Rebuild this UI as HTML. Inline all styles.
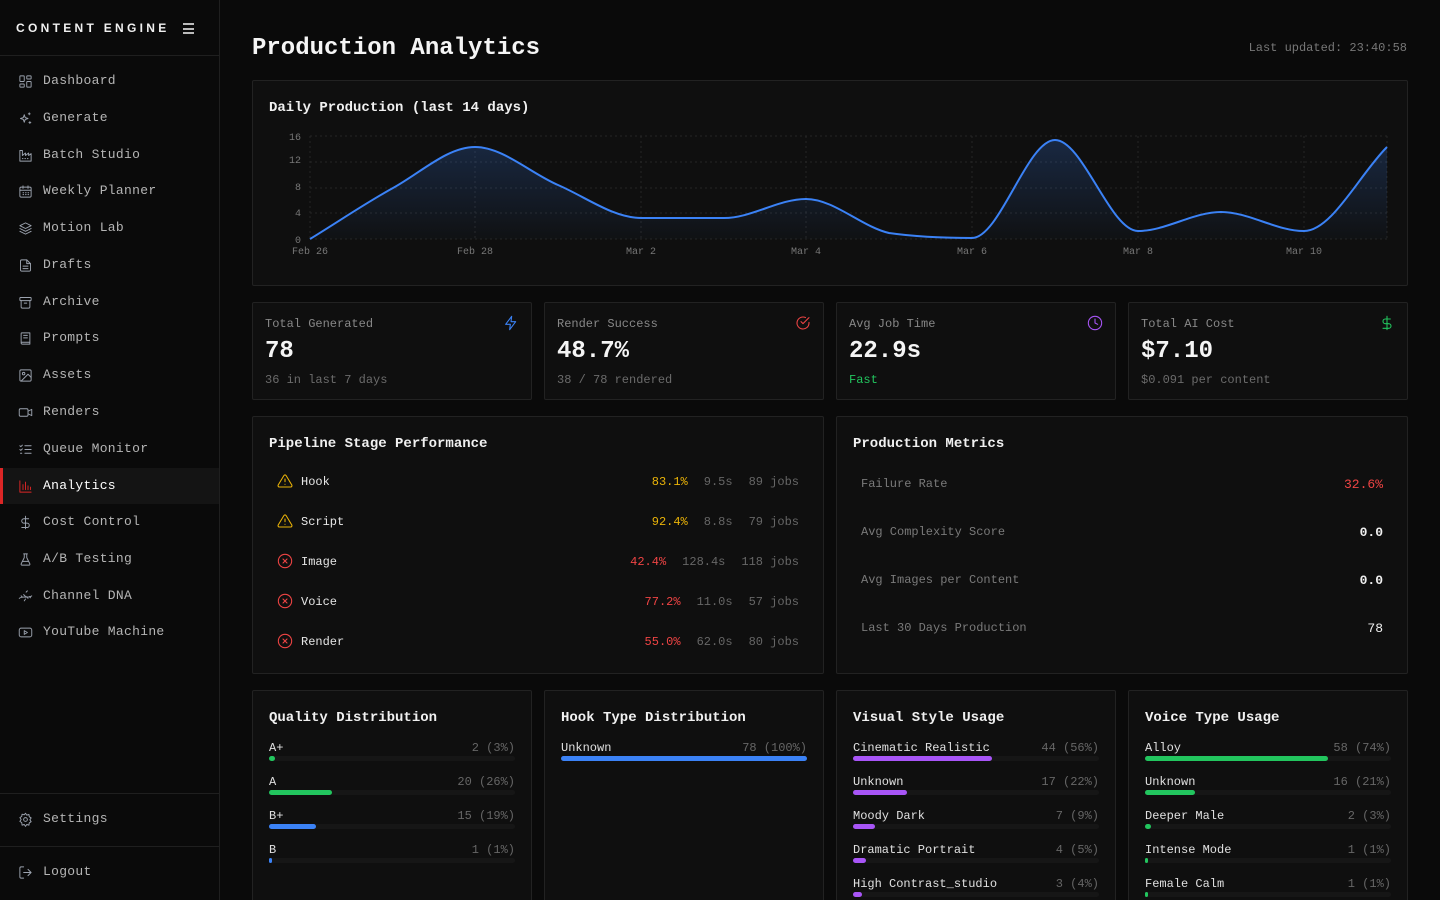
<!DOCTYPE html>
<html><head><meta charset="utf-8"><style>
*{box-sizing:border-box;margin:0;padding:0}
html,body{width:1440px;height:900px;overflow:hidden}
body{background:#0a0a0a;font-family:"Liberation Mono",monospace;color:#e5e5e5;position:relative}
.sb{position:absolute;left:0;top:0;width:220px;height:900px;background:#0a0a0a;border-right:1px solid #1f1f1f}
.logo{position:absolute;left:16px;top:21px;font-family:"Liberation Sans",sans-serif;font-weight:bold;font-size:12px;letter-spacing:3.3px;color:#f0f0f0}
.hamb{position:absolute;left:183px;top:23px;width:11px}
.hamb i{display:block;height:2px;background:#bbb;margin-bottom:2.5px}
.hl{position:absolute;left:0;width:219px;height:1px;background:#1f1f1f}
.nav{position:absolute;left:0;width:219px;height:36px;display:flex;align-items:center;font-size:13px;color:#b5b5b5;letter-spacing:.3px}
.nav svg{position:absolute;left:18px;width:15px;height:15px;fill:none;stroke:#9ca3af;stroke-width:1.5;stroke-linecap:round;stroke-linejoin:round}
.nav span{position:absolute;left:43px;top:10px}
.nav.act{background:#141414;color:#fff}
.nav.act::before{content:"";position:absolute;left:0;top:0;width:3px;height:36px;background:#dc2626}
.nav.act svg{stroke:#dc2626}
.card{position:absolute;background:#0f0f0f;border:1px solid #222;border-radius:2px}
h1{position:absolute;left:252px;top:35px;font-size:24px;font-weight:bold;color:#f5f5f5}
.upd{position:absolute;right:33px;top:41px;font-size:12px;color:#777}
.ttl{position:absolute;left:16px;font-size:14px;font-weight:bold;color:#f0f0f0}
.sl{position:absolute;left:12px;top:14px;font-size:12px;color:#888}
.sv{position:absolute;left:12px;top:35px;font-size:24px;font-weight:bold;color:#f5f5f5}
.ss{position:absolute;left:12px;top:70px;font-size:12px;color:#6b6b6b}
.si{position:absolute;right:12px;top:12px;width:16px;height:16px;fill:none;stroke-width:1.6;stroke-linecap:round;stroke-linejoin:round}
.pr{position:absolute;left:24px;right:24px;height:20px;font-size:12px}
.pr svg{position:absolute;left:0;top:2px;width:16px;height:16px;fill:none;stroke-width:1.6;stroke-linecap:round;stroke-linejoin:round}
.pr .n{position:absolute;left:24px;top:4px;color:#e5e5e5}
.pr .r{position:absolute;right:0;top:4px;color:#666;white-space:nowrap}
.pr .r span{margin-left:16px}
.mr{position:absolute;left:24px;right:24px;font-size:12px;color:#7a7a7a}
.mr b{position:absolute;right:0;top:0;font-size:13px;color:#f0f0f0}
.br{position:absolute;left:16px;right:16px;height:30px;font-size:12px}
.br .l{position:absolute;left:0;top:0;color:#e0e0e0}
.br .v{position:absolute;right:0;top:0;color:#666}
.br .t{position:absolute;left:0;right:0;top:15px;height:5px;background:#161616;border-radius:3px}
.br .t i{display:block;height:5px;border-radius:3px}
</style></head><body>
<div class="sb">
<div class="logo">CONTENT ENGINE</div>
<div class="hamb"><i></i><i></i><i></i></div>
<div class="hl" style="top:55px"></div>
<div class="nav" style="top:63px"><svg viewBox="0 0 24 24"><rect x="3" y="3" width="7" height="9" rx="1"/><rect x="14" y="3" width="7" height="5" rx="1"/><rect x="14" y="12" width="7" height="9" rx="1"/><rect x="3" y="16" width="7" height="5" rx="1"/></svg><span>Dashboard</span></div>
<div class="nav" style="top:100px"><svg viewBox="0 0 24 24"><path d="M10 6l1.5 4.5L16 12l-4.5 1.5L10 18l-1.5-4.5L4 12l4.5-1.5z"/><path d="M18 3v3M16.5 4.5h3M19 17v3M17.5 18.5h3"/></svg><span>Generate</span></div>
<div class="nav" style="top:137px"><svg viewBox="0 0 24 24"><path d="M3 21V4h4v8l5-4v4l5-4v4l4-3v12z"/><path d="M7 17h1M11 17h1M15 17h1"/></svg><span>Batch Studio</span></div>
<div class="nav" style="top:173px"><svg viewBox="0 0 24 24"><rect x="3" y="5" width="18" height="16" rx="2"/><path d="M8 3v4M16 3v4M3 10h18M8 14h1M12 14h1M16 14h1M8 17h1M12 17h1M16 17h1"/></svg><span>Weekly Planner</span></div>
<div class="nav" style="top:210px"><svg viewBox="0 0 24 24"><path d="M12 3l9 4.5-9 4.5-9-4.5z"/><path d="M3 12l9 4.5 9-4.5M3 16.5L12 21l9-4.5"/></svg><span>Motion Lab</span></div>
<div class="nav" style="top:247px"><svg viewBox="0 0 24 24"><path d="M14 3H6a2 2 0 0 0-2 2v14a2 2 0 0 0 2 2h12a2 2 0 0 0 2-2V9z"/><path d="M14 3v6h6M8 13h8M8 17h8"/></svg><span>Drafts</span></div>
<div class="nav" style="top:284px"><svg viewBox="0 0 24 24"><rect x="3" y="4" width="18" height="5" rx="1"/><path d="M5 9v10a2 2 0 0 0 2 2h10a2 2 0 0 0 2-2V9M10 13h4"/></svg><span>Archive</span></div>
<div class="nav" style="top:320px"><svg viewBox="0 0 24 24"><path d="M5 4a1 1 0 0 1 1-1h13v15H6a1 1 0 0 0-1 1zM5 19a2 2 0 0 0 2 2h12v-3"/><path d="M9 7h6M9 11h6"/></svg><span>Prompts</span></div>
<div class="nav" style="top:357px"><svg viewBox="0 0 24 24"><rect x="3" y="3" width="18" height="18" rx="2"/><circle cx="9" cy="9" r="2"/><path d="M21 15l-5-5L5 21"/></svg><span>Assets</span></div>
<div class="nav" style="top:394px"><svg viewBox="0 0 24 24"><rect x="2" y="6" width="14" height="12" rx="2"/><path d="M16 10l6-3v10l-6-3"/></svg><span>Renders</span></div>
<div class="nav" style="top:431px"><svg viewBox="0 0 24 24"><path d="M3 6l1.5 1.5L7 5M3 12l1.5 1.5L7 11M11 6h10M11 12h10M11 18h10M4 18h2"/></svg><span>Queue Monitor</span></div>
<div class="nav act" style="top:468px"><svg viewBox="0 0 24 24"><path d="M3 3v18h18M8 17V9M12 17V5M16 17v-6M20 17v-4"/></svg><span>Analytics</span></div>
<div class="nav" style="top:504px"><svg viewBox="0 0 24 24"><path d="M12 2v20M17 6H9.5a3.5 3.5 0 0 0 0 7h5a3.5 3.5 0 0 1 0 7H6"/></svg><span>Cost Control</span></div>
<div class="nav" style="top:541px"><svg viewBox="0 0 24 24"><path d="M9 3h6M10 3v6l-5 10a1.5 1.5 0 0 0 1.3 2h11.4a1.5 1.5 0 0 0 1.3-2L14 9V3M7 15h10"/></svg><span>A/B Testing</span></div>
<div class="nav" style="top:578px"><svg viewBox="0 0 24 24"><path d="M2 15c6.7-5 13.3 1 20-4M5 11l2 2M9 9l3 3M14 12l2 3M18 12l2 2M10 19l2-3M13 5l2-2"/></svg><span>Channel DNA</span></div>
<div class="nav" style="top:614px"><svg viewBox="0 0 24 24"><rect x="2" y="5" width="20" height="14" rx="3"/><path d="M10 9l5 3-5 3z"/></svg><span>YouTube Machine</span></div>
<div class="hl" style="top:793px"></div>
<div class="nav" style="top:801px"><svg viewBox="0 0 24 24"><circle cx="12" cy="12" r="3"/><path d="M12 2l2 3 3.5-1 .5 3.5 3 2-2 3 2 3-3 2-.5 3.5-3.5-1-2 3-2-3-3.5 1L6 17l-3-2 2-3-2-3 3-2 .5-3.5 3.5 1z"/></svg><span>Settings</span></div>
<div class="hl" style="top:846px"></div>
<div class="nav" style="top:854px"><svg viewBox="0 0 24 24"><path d="M9 21H5a2 2 0 0 1-2-2V5a2 2 0 0 1 2-2h4M16 17l5-5-5-5M21 12H9"/></svg><span>Logout</span></div>
</div>

<h1>Production Analytics</h1>
<div class="upd">Last updated: 23:40:58</div>

<div class="card" style="left:252px;top:80px;width:1156px;height:206px">
<div class="ttl" style="top:19px">Daily Production (last 14 days)</div>
</div>
<svg style="position:absolute;left:0;top:0" width="1440" height="300" font-family="Liberation Mono, monospace" font-size="10">
<defs><linearGradient id="g" x1="0" y1="0" x2="0" y2="1"><stop offset="0" stop-color="#3b82f6" stop-opacity="0.22"/><stop offset="1" stop-color="#3b82f6" stop-opacity="0.02"/></linearGradient></defs>
<g stroke="#262626" stroke-dasharray="2 3" stroke-width="1">
<path d="M310 136H1387M310 162H1387M310 188H1387M310 213H1387M310 239H1387"/>
<path d="M310 136V239M475 136V239M641 136V239M806 136V239M972 136V239M1138 136V239M1304 136V239M1387 136V239"/>
</g>
<g fill="#777" text-anchor="end"><text x="301" y="140">16</text><text x="301" y="163">12</text><text x="301" y="190">8</text><text x="301" y="216">4</text><text x="301" y="243">0</text></g>
<g fill="#777" text-anchor="middle"><text x="310" y="254">Feb 26</text><text x="475" y="254">Feb 28</text><text x="641" y="254">Mar 2</text><text x="806" y="254">Mar 4</text><text x="972" y="254">Mar 6</text><text x="1138" y="254">Mar 8</text><text x="1304" y="254">Mar 10</text></g>
<path d="M310 239C337.7 222.1 365.3 203.2 393 188C420.7 172.8 447.3 147 475 147C502.7 147 530.3 173.1 558 185C585.7 196.9 613.3 218 641 218C668.7 218 696.3 218 724 218C751.7 218 778.3 199 806 199C833.7 199 861.3 226.6 889 233C916.7 237 944.3 238 972 238C999.7 238 1027.3 140 1055 140C1082.7 140 1110.3 231 1138 231C1165.7 231 1193.3 212 1221 212C1248.7 212 1276.3 231 1304 231C1331.7 231 1359.3 174.7 1387 147V239H310Z" fill="url(#g)"/>
<path d="M310 239C337.7 222.1 365.3 203.2 393 188C420.7 172.8 447.3 147 475 147C502.7 147 530.3 173.1 558 185C585.7 196.9 613.3 218 641 218C668.7 218 696.3 218 724 218C751.7 218 778.3 199 806 199C833.7 199 861.3 226.6 889 233C916.7 237 944.3 238 972 238C999.7 238 1027.3 140 1055 140C1082.7 140 1110.3 231 1138 231C1165.7 231 1193.3 212 1221 212C1248.7 212 1276.3 231 1304 231C1331.7 231 1359.3 174.7 1387 147" fill="none" stroke="#3b82f6" stroke-width="2"/>
</svg>

<div class="card" style="left:252px;top:302px;width:280px;height:98px"><div class="sl">Total Generated</div><div class="sv">78</div><div class="ss">36 in last 7 days</div><svg class="si" viewBox="0 0 24 24" stroke="#3b82f6"><path d="M13 2L4 14h7l-1 8 9-12h-7z"/></svg></div>
<div class="card" style="left:544px;top:302px;width:280px;height:98px"><div class="sl">Render Success</div><div class="sv">48.7%</div><div class="ss">38 / 78 rendered</div><svg class="si" viewBox="0 0 24 24" stroke="#ef4444"><path d="M21 11.1V12a9 9 0 1 1-5.3-8.2"/><path d="M21 4L12 13l-3-3"/></svg></div>
<div class="card" style="left:836px;top:302px;width:280px;height:98px"><div class="sl">Avg Job Time</div><div class="sv">22.9s</div><div class="ss" style="color:#22c55e">Fast</div><svg class="si" viewBox="0 0 24 24" stroke="#a855f7"><circle cx="12" cy="12" r="10"/><path d="M12 6v6l4 2"/></svg></div>
<div class="card" style="left:1128px;top:302px;width:280px;height:98px"><div class="sl">Total AI Cost</div><div class="sv">$7.10</div><div class="ss">$0.091 per content</div><svg class="si" viewBox="0 0 24 24" stroke="#22c55e"><path d="M12 2v20M17 6H9.5a3.5 3.5 0 0 0 0 7h5a3.5 3.5 0 0 1 0 7H6"/></svg></div>

<div class="card" style="left:252px;top:416px;width:572px;height:258px">
<div class="ttl" style="top:19px">Pipeline Stage Performance</div>
<div class="pr" style="top:54px"><svg viewBox="0 0 24 24" stroke="#eab308"><path d="M10.3 3.9L1.8 18a2 2 0 0 0 1.7 3h17a2 2 0 0 0 1.7-3L13.7 3.9a2 2 0 0 0-3.4 0zM12 9v4M12 17h.01"/></svg><span class="n">Hook</span><span class="r"><span style="color:#eab308">83.1%</span><span>9.5s</span><span>89 jobs</span></span></div>
<div class="pr" style="top:94px"><svg viewBox="0 0 24 24" stroke="#eab308"><path d="M10.3 3.9L1.8 18a2 2 0 0 0 1.7 3h17a2 2 0 0 0 1.7-3L13.7 3.9a2 2 0 0 0-3.4 0zM12 9v4M12 17h.01"/></svg><span class="n">Script</span><span class="r"><span style="color:#eab308">92.4%</span><span>8.8s</span><span>79 jobs</span></span></div>
<div class="pr" style="top:134px"><svg viewBox="0 0 24 24" stroke="#ef4444"><circle cx="12" cy="12" r="10"/><path d="M15 9l-6 6M9 9l6 6"/></svg><span class="n">Image</span><span class="r"><span style="color:#ef4444">42.4%</span><span>128.4s</span><span>118 jobs</span></span></div>
<div class="pr" style="top:174px"><svg viewBox="0 0 24 24" stroke="#ef4444"><circle cx="12" cy="12" r="10"/><path d="M15 9l-6 6M9 9l6 6"/></svg><span class="n">Voice</span><span class="r"><span style="color:#ef4444">77.2%</span><span>11.0s</span><span>57 jobs</span></span></div>
<div class="pr" style="top:214px"><svg viewBox="0 0 24 24" stroke="#ef4444"><circle cx="12" cy="12" r="10"/><path d="M15 9l-6 6M9 9l6 6"/></svg><span class="n">Render</span><span class="r"><span style="color:#ef4444">55.0%</span><span>62.0s</span><span>80 jobs</span></span></div>
</div>

<div class="card" style="left:836px;top:416px;width:572px;height:258px">
<div class="ttl" style="top:19px">Production Metrics</div>
<div class="mr" style="top:60px">Failure Rate<b style="color:#ef4444;font-weight:normal">32.6%</b></div>
<div class="mr" style="top:108px">Avg Complexity Score<b>0.0</b></div>
<div class="mr" style="top:156px">Avg Images per Content<b>0.0</b></div>
<div class="mr" style="top:204px">Last 30 Days Production<b style="font-weight:normal">78</b></div>
</div>

<div class="card" style="left:252px;top:690px;width:280px;height:230px">
<div class="ttl" style="top:19px">Quality Distribution</div>
<div class="br" style="top:50px"><span class="l">A+</span><span class="v">2 (3%)</span><div class="t"><i style="width:6px;background:#22c55e"></i></div></div>
<div class="br" style="top:84px"><span class="l">A</span><span class="v">20 (26%)</span><div class="t"><i style="width:63px;background:#22c55e"></i></div></div>
<div class="br" style="top:118px"><span class="l">B+</span><span class="v">15 (19%)</span><div class="t"><i style="width:47px;background:#3b82f6"></i></div></div>
<div class="br" style="top:152px"><span class="l">B</span><span class="v">1 (1%)</span><div class="t"><i style="width:3px;background:#3b82f6"></i></div></div>
</div>
<div class="card" style="left:544px;top:690px;width:280px;height:230px">
<div class="ttl" style="top:19px">Hook Type Distribution</div>
<div class="br" style="top:50px"><span class="l">Unknown</span><span class="v">78 (100%)</span><div class="t"><i style="width:100%;background:#3b82f6"></i></div></div>
</div>
<div class="card" style="left:836px;top:690px;width:280px;height:230px">
<div class="ttl" style="top:19px">Visual Style Usage</div>
<div class="br" style="top:50px"><span class="l">Cinematic Realistic</span><span class="v">44 (56%)</span><div class="t"><i style="width:139px;background:#a855f7"></i></div></div>
<div class="br" style="top:84px"><span class="l">Unknown</span><span class="v">17 (22%)</span><div class="t"><i style="width:54px;background:#a855f7"></i></div></div>
<div class="br" style="top:118px"><span class="l">Moody Dark</span><span class="v">7 (9%)</span><div class="t"><i style="width:22px;background:#a855f7"></i></div></div>
<div class="br" style="top:152px"><span class="l">Dramatic Portrait</span><span class="v">4 (5%)</span><div class="t"><i style="width:13px;background:#a855f7"></i></div></div>
<div class="br" style="top:186px"><span class="l">High Contrast_studio</span><span class="v">3 (4%)</span><div class="t"><i style="width:9px;background:#a855f7"></i></div></div>
</div>
<div class="card" style="left:1128px;top:690px;width:280px;height:230px">
<div class="ttl" style="top:19px">Voice Type Usage</div>
<div class="br" style="top:50px"><span class="l">Alloy</span><span class="v">58 (74%)</span><div class="t"><i style="width:183px;background:#22c55e"></i></div></div>
<div class="br" style="top:84px"><span class="l">Unknown</span><span class="v">16 (21%)</span><div class="t"><i style="width:50px;background:#22c55e"></i></div></div>
<div class="br" style="top:118px"><span class="l">Deeper Male</span><span class="v">2 (3%)</span><div class="t"><i style="width:6px;background:#22c55e"></i></div></div>
<div class="br" style="top:152px"><span class="l">Intense Mode</span><span class="v">1 (1%)</span><div class="t"><i style="width:3px;background:#22c55e"></i></div></div>
<div class="br" style="top:186px"><span class="l">Female Calm</span><span class="v">1 (1%)</span><div class="t"><i style="width:3px;background:#22c55e"></i></div></div>
</div>
</body></html>
